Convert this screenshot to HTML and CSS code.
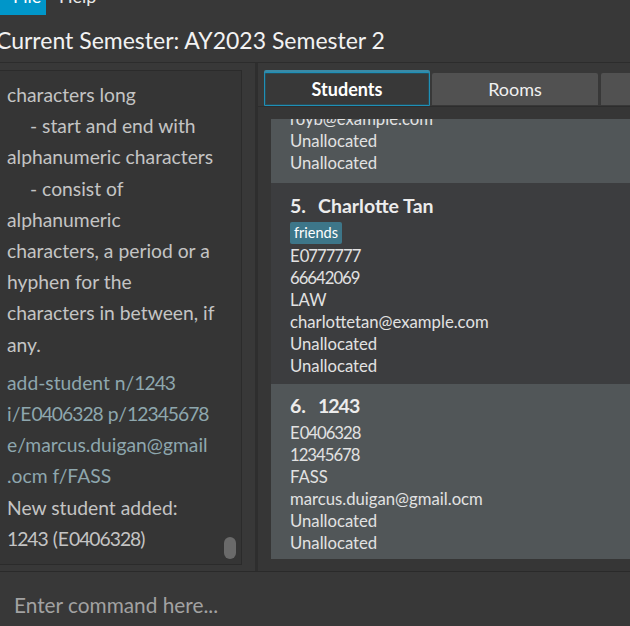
FILE: index.html
```html
<!DOCTYPE html>
<html>
<head>
<meta charset="utf-8">
<link rel="stylesheet" href="styles.css">
</head>
<body>
<div class="app">
  <div class="menubar">
    <span class="menu-item active">File</span>
    <span class="menu-item">Help</span>
  </div>
  <div class="semester">Current Semester: AY2023 Semester 2</div>
  <div class="main">
    <div class="left">
      <div class="result">
        <div class="para">
          <div>characters long</div>
          <div class="ind">- start and end with</div>
          <div>alphanumeric characters</div>
          <div class="ind">- consist of</div>
          <div>alphanumeric</div>
          <div>characters, a period or a</div>
          <div>hyphen for the</div>
          <div>characters in between, if</div>
          <div>any.</div>
        </div>
        <div class="para cmd">
          <div>add-student n/<span class="dg">1243</span></div>
          <div>i/E<span class="dg">0406328</span> p/<span class="dg">12345678</span></div>
          <div>e/marcus.duigan@gmail</div>
          <div>.ocm f/FASS</div>
        </div>
        <div class="para">
          <div>New student added:</div>
          <div><span class="dg">1243</span> (E<span class="dg">0406328</span>)</div>
        </div>
        <div class="thumb"></div>
      </div>
    </div>
    <div class="split"><div class="split-line"></div></div>
    <div class="right">
      <div class="tabs">
        <div class="tab selected">Students</div>
        <div class="tab">Rooms</div>
        <div class="tab"></div>
      </div>
      <div class="tab-content">
        <div class="list">
          <div class="card light first">
            <div class="line">royb@example.com</div>
            <div class="line">Unallocated</div>
            <div class="line">Unallocated</div>
          </div>
          <div class="card dark">
            <div class="name"><span class="num">5.</span><span>Charlotte Tan</span></div>
            <div class="tags"><span class="tag">friends</span></div>
            <div class="line">E<span class="dg">0777777</span></div>
            <div class="line"><span class="dg">66642069</span></div>
            <div class="line">LAW</div>
            <div class="line">charlottetan@example.com</div>
            <div class="line">Unallocated</div>
            <div class="line">Unallocated</div>
          </div>
          <div class="card light last">
            <div class="name"><span class="num">6.</span><span class="dg">1243</span></div>
            <div class="line">E<span class="dg">0406328</span></div>
            <div class="line"><span class="dg">12345678</span></div>
            <div class="line">FASS</div>
            <div class="line">marcus.duigan@gmail.ocm</div>
            <div class="line">Unallocated</div>
            <div class="line">Unallocated</div>
          </div>
        </div>
      </div>
    </div>
  </div>
  <div class="command">
    <div class="placeholder">Enter command here...</div>
  </div>
</div>
</body>
</html>
```
FILE: styles.css
```css
html, body {
  margin: 0;
  padding: 0;
  background: #383838;
  overflow: hidden;
}
.app {
  width: 630px;
  height: 626px;
  display: flex;
  flex-direction: column;
  font-family: Lato, "Open Sans", sans-serif;
  overflow: hidden;
  background: #383838;
}
.dg {
  letter-spacing: -1px;
}
.menubar {
  height: 15px;
  display: flex;
  overflow: hidden;
  flex-shrink: 0;
}
.menu-item {
  font-size: 18px;
  line-height: 18px;
  margin-top: -13px;
  color: #e8e8e8;
  padding: 0 12px 0 13px;
  height: 28px;
}
.menu-item.active {
  background: #0096c9;
  color: #ffffff;
  width: 21px;
}
.semester {
  height: 48px;
  flex-shrink: 0;
  font-size: 23px;
  line-height: 50px;
  color: #f2f2f2;
  margin-left: -4px;
  border-bottom: 1px solid #2c2c2c;
  box-sizing: border-box;
}
.main {
  display: flex;
  height: 509px;
  flex-shrink: 0;
  border-bottom: 1px solid #2a2a2a;
  box-sizing: border-box;
}
.left {
  width: 242px;
  flex-shrink: 0;
  padding-top: 7px;
  height: 495px;
}
.result {
  position: relative;
  height: 495px;
  box-sizing: border-box;
  border: 1px solid #2b2b2b;
  border-left: none;
  background: #353535;
  padding: 8px 0 0 7px;
  font-size: 19.3px;
  line-height: 31.2px;
  color: #c4c4c4;
  overflow: hidden;
  white-space: nowrap;
}
.para + .para {
  margin-top: 7px;
}
.cmd + .para {
  margin-top: 0;
}
.ind {
  padding-left: 23px;
}
.cmd {
  color: #8ea7ae;
}
.thumb {
  position: absolute;
  left: 224px;
  top: 466px;
  width: 12px;
  height: 22px;
  border-radius: 6px;
  background: #6a6a6a;
}
.split {
  width: 16px;
  flex-shrink: 0;
  display: flex;
  justify-content: flex-end;
}
.split-line {
  width: 3px;
  background: #2e2e2e;
}
.right {
  flex: 1;
  display: flex;
  flex-direction: column;
  background: #383838;
  min-width: 0;
}
.tabs {
  display: flex;
  height: 43px;
  padding: 7px 0 0 5px;
  box-sizing: border-box;
  background: #383838;
  flex-shrink: 0;
}
.tab {
  width: 166px;
  height: 32px;
  margin-top: 3px;
  margin-right: 3px;
  background: #515151;
  color: #f0f0f0;
  font-size: 18px;
  text-align: center;
  line-height: 32px;
  box-sizing: border-box;
  border-radius: 2px 2px 0 0;
  flex-shrink: 0;
}
.tab.selected {
  background: #383838;
  border: 1px solid #1f8fb6;
  box-shadow: inset 0 0 0 1px #2a4b56, 0 -2px 0 0 #3a8aa6;
  height: 34px;
  margin-top: 2px;
  margin-left: 1px;
  margin-right: 2px;
  width: 166px;
  font-weight: bold;
  color: #ffffff;
  line-height: 32px;
}
.tab-content {
  flex: 1;
  border-top: 1px solid #2d2d2d;
  background: #363636;
  padding: 12px 0 12px 13px;
  box-sizing: border-box;
  min-height: 0;
}
.list {
  height: 440px;
  overflow: hidden;
}
.card {
  padding: 10px 0 7px 19px;
  color: #e2e2e2;
  font-size: 16.7px;
  white-space: nowrap;
}
.card.light {
  background: #515658;
}
.card.dark {
  background: #3c3d3f;
}
.card.first {
  margin-top: -11px;
  padding-top: 0;
  padding-bottom: 9px;
}
.card.last {
  padding-top: 9px;
  padding-bottom: 9px;
}
.name {
  font-size: 19.5px;
  font-weight: bold;
  line-height: 26px;
  margin-bottom: 3px;
  color: #ececec;
}
.num {
  display: inline-block;
  width: 28px;
}
.line {
  line-height: 22px;
  height: 22px;
}
.tags {
  height: 23px;
}
.tag {
  display: inline-block;
  background: #3d7689;
  color: #ffffff;
  font-size: 14.5px;
  line-height: 22px;
  padding: 0 4px;
  border-radius: 2px;
}
.command {
  flex: 1;
  background: #383838;
  padding-left: 14px;
}
.placeholder {
  font-size: 20.8px;
  line-height: 66px;
  color: #a2a2a2;
}
```
